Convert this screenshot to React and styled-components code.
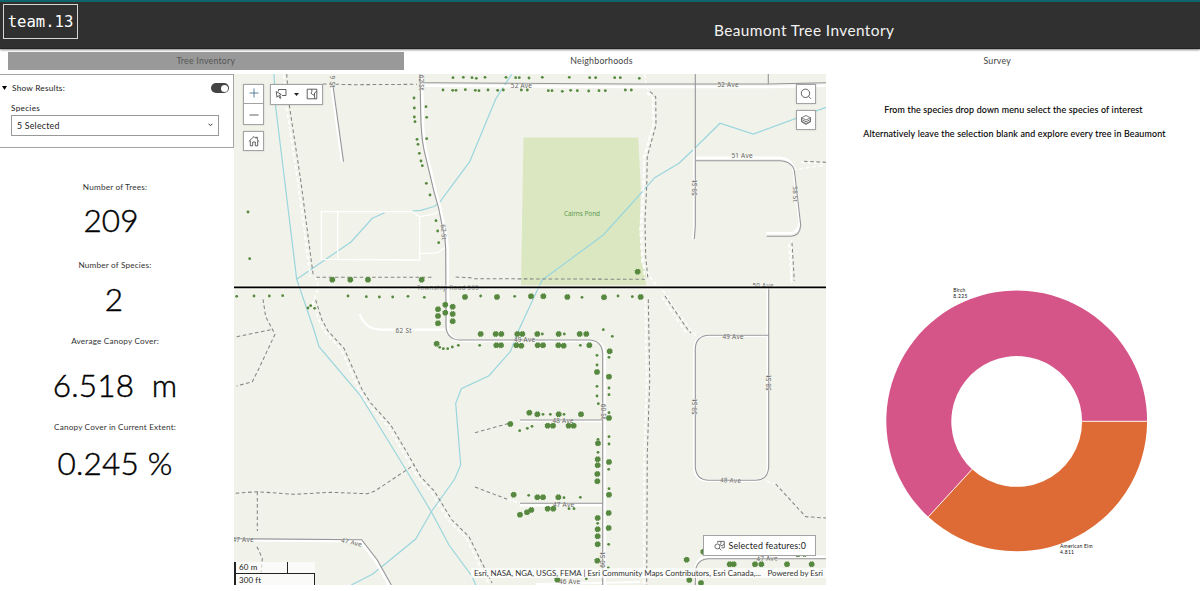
import React from "react";
import styled, { createGlobalStyle } from "styled-components";

const GlobalStyle = createGlobalStyle`
  * { box-sizing: border-box; }
  body { margin: 0; background: #fff; font-family: Lato, "Liberation Sans", sans-serif; color: #222; overflow: hidden; }
`;

const Page = styled.div`
  width: 1200px;
  height: 591px;
  display: flex;
  flex-direction: column;
  background: #fff;
`;

const Header = styled.header`
  height: 49px;
  flex: none;
  display: flex;
  align-items: flex-start;
  background: #303030;
  border-top: 2px solid #0d666d;
  border-bottom: 1px solid #222;
  box-shadow: 0 1px 2px rgba(0, 0, 0, 0.5);
`;

const Logo = styled.div`
  margin: 2px 0 0 3px;
  width: 75px;
  height: 35px;
  border: 1.5px solid #d6d6d6;
  color: #fff;
  font: 15.6px/35px "DejaVu Sans Mono", monospace;
  text-align: center;
  white-space: nowrap;
`;

const Title = styled.h1`
  margin: 17px 0 0 636px;
  font-size: 15.4px;
  line-height: 22px;
  font-weight: 400;
  letter-spacing: 0.42px;
  color: #f2f2f2;
  white-space: nowrap;
`;

const Tabs = styled.nav`
  flex: none;
  height: 25px;
  padding: 3px 0 4px 8px;
  display: flex;
`;

const Tab = styled.div`
  width: 395.7px;
  height: 18px;
  line-height: 18px;
  font-size: 8.8px;
  letter-spacing: 0.22px;
  text-align: center;
  color: ${(p) => (p.$active ? "#555" : "#444")};
  background: ${(p) => (p.$active ? "#999" : "transparent")};
`;

const Main = styled.main`
  display: grid;
  grid-template-columns: 234px 592px 374px;
  height: 510.5px;
`;

const Side = styled.aside`
  display: flex;
  flex-direction: column;
`;

const FilterPanel = styled.section`
  height: 73.5px;
  border: 1px solid #a5a5a5;
  border-left: 0;
  padding: 7px 4px 0 2px;
`;

const FilterHead = styled.div`
  display: flex;
  align-items: center;
  height: 12px;
  font-size: 8.3px;
  letter-spacing: 0.2px;
  svg { margin-right: 5px; }
`;

const Toggle = styled.span`
  margin-left: auto;
  width: 18px;
  height: 10px;
  border-radius: 5px;
  background: #444;
  display: flex;
  justify-content: flex-end;
  padding: 1.5px;
  &::after { content: ""; width: 7px; height: 7px; border-radius: 50%; background: #fff; }
`;

const FieldLabel = styled.div`
  margin: 9px 0 0 9px;
  font-size: 8.2px;
  line-height: 11px;
  letter-spacing: 0.3px;
`;

const Select = styled.div`
  margin: 1px 0 0 9px;
  width: 207.5px;
  height: 20.5px;
  border: 1px solid #999;
  display: flex;
  align-items: center;
  justify-content: space-between;
  padding: 0 5px;
  font-size: 8.8px;
  letter-spacing: 0.22px;
`;

const Stat = styled.section`
  margin-top: ${(p) => p.$top}px;
  width: 230px;
  text-align: center;
`;

const StatLabel = styled.div`
  font-size: 8.2px;
  line-height: 12px;
  letter-spacing: 0.18px;
  color: #333;
`;

const StatValue = styled.div`
  margin-top: ${(p) => p.$gap}px;
  padding-right: ${(p) => p.$trail || 0}px;
  font-size: 31.5px;
  line-height: 36px;
  font-weight: 300;
  letter-spacing: ${(p) => p.$spacing || 0}px;
  color: #000;
  -webkit-text-stroke: 0.45px #000;
  white-space: pre;
`;

const MapFrame = styled.section`
  position: relative;
  background: #f1f2ea;
  overflow: hidden;
`;

const MapCanvas = styled.svg`
  display: block;
  width: 592px;
  height: 511px;
`;

const Controls = styled.div`
  position: absolute;
  top: 9.5px;
  ${(p) => (p.$right ? "right: 9.7px;" : "left: 9.4px;")}
  display: flex;
  flex-direction: column;
  gap: 6px;
`;

const Row = styled.div`
  display: flex;
  align-items: flex-start;
  gap: 6.4px;
`;

const ControlGroup = styled.div`
  width: ${(p) => p.$w || 20.4}px;
  height: ${(p) => p.$h || 20.4}px;
  background: #fff;
  border: 1px solid #a3a3a3;
  box-shadow: 0 0 2px rgba(0, 0, 0, 0.15);
  display: flex;
  flex-direction: ${(p) => (p.$row ? "row" : "column")};
  align-items: center;
  justify-content: space-around;
`;

const Rule = styled.i`
  width: 100%;
  height: 1px;
  flex: none;
  background: #a3a3a3;
`;

const ScaleBar = styled.div`
  position: absolute;
  left: 0;
  bottom: 0;
  width: 81px;
  height: 23px;
  background: rgba(255, 255, 255, 0.65);
  border-left: 2px solid #222;
  font-size: 8px;
  letter-spacing: 0.1px;
`;

const ScaleMetric = styled.div`
  width: 52px;
  height: 11px;
  line-height: 11px;
  padding-left: 3px;
  border-right: 1px solid #222;
`;

const ScaleImperial = styled.div`
  width: 79px;
  height: 12px;
  line-height: 12px;
  padding-left: 3px;
  border-top: 1px solid #222;
  border-right: 1px solid #222;
`;

const Attribution = styled.div`
  position: absolute;
  right: 0;
  bottom: 6.5px;
  width: 355px;
  height: 10px;
  line-height: 10px;
  padding: 0 3px;
  display: flex;
  justify-content: space-between;
  font-size: 7.9px;
  background: rgba(255, 255, 255, 0.72);
  color: #333;
  white-space: nowrap;
`;

const Selected = styled.div`
  position: absolute;
  right: 10px;
  bottom: 29px;
  width: 113.5px;
  height: 20.5px;
  border: 1px solid #a3a3a3;
  background: #fff;
  display: flex;
  align-items: center;
  padding-left: 10px;
  gap: 4px;
  font-size: 8.9px;
  letter-spacing: 0.15px;
`;

const Info = styled.section`
  display: flex;
  flex-direction: column;
`;

const Hint = styled.p`
  margin: ${(p) => p.$top}px 0 0;
  padding-left: ${(p) => p.$indent}px;
  font-size: 8.9px;
  line-height: 12px;
  letter-spacing: ${(p) => p.$spacing}px;
  color: #000;
  -webkit-text-stroke: 0.12px #000;
  text-align: center;
  white-space: nowrap;
`;

const Donut = styled.svg`
  margin-top: 134px;
  width: 374px;
  height: 300px;
`;

const streams = [
  "M274 74 275.7 107 296.7 279.3 314 330 319 346.7 360 395 405.7 469.3 431.3 511.7 449 545 472.3 576.7 475.7 585",
  "M296.7 279.3 351.3 241.7 372.3 218.3 384.7 212.7",
  "M412.3 211 420.7 210.3 434 206.5 439 203 469.7 161.7 495.7 99 511.7 74.3",
  "M826 107.3 753.3 134 720 123.3 694.7 148.3 679 163.3 654.7 177.7 634 201 603.3 235 542.3 280 537.3 290 517.3 333.3 510.7 351 489 375.7 461.3 388.7 455.7 403.3 460.7 465 454.7 479 431.3 511.7 415.7 539 381.7 566.7 372.3 574.3 351.3 585",
];

const paths = [
  "M286.7 74 289 103.3 300.7 180 313.3 276",
  "M650 91.7 655.7 96.7 656 125 647.3 156.7 646.7 186.7 645 220 645.7 256.7 648 279.3",
  "M648.3 299.3 649.7 380 647.3 453 646.7 585",
  "M665 296 688 330 691 333",
  "M804 161.3 826 162.3",
  "M792 242.7 794.3 280.7",
  "M315.7 300 322 320 328 331 344 348.3 362.3 390 370.7 403 390.7 425 407.3 453 420.7 476.7 434 490.7 452 520 469 536.7 492 583",
];

const plainPaths = [
  "M323 84 355 84.7 417 84.3",
  "M316.3 277.3H434",
  "M455.7 277 470 277.7 474 278.7 647.3 279.3",
  "M263 299.3 265.7 316.7 275 334.3 259 368.3 252.3 381.7 236.7 386",
  "M236.7 336.7 272.3 329.3",
  "M235.7 493.3 257.3 491.7 294 494.3 330.7 492.3 367.3 493.7 375 491 414 465",
  "M257.3 491.7V531",
  "M257 546.7 262.3 558.3 260.7 577",
  "M475 432.7 509 423.3",
  "M475 487 507.3 499.3",
  "M775.7 484 805.7 516.7 826 518",
];

const roads = [
  { d: "M420 82.7 434 82.7 634 84H768L826 82.7", dx: 0, dy: 3 },
  { d: "M420 74 420.7 113Q421 135 424 150L434 191.7Q439 207 442 225 445.5 238 445.7 250L446 326.7Q447 339 459 340H590Q602 341 602.7 353.3V585", dx: 2, dy: 1 },
  { d: "M333 86 343.5 161.7", dx: -1.5, dy: 0 },
  { d: "M695.3 148V226L694.3 239", dx: -1, dy: 0 },
  { d: "M696 160.7H780.7Q794 162 794.7 173.3L800.7 225Q800 236 790.7 236.3H766.7", dx: -1, dy: -3 },
  { d: "M768.7 288V466.7Q768 480 755.7 480.3H709Q696 480 695.3 466.7V348.3Q696 336 709 335.3H768.7", dx: -1, dy: 0.5 },
  { d: "M826 558.7H709Q696 559 695.3 573V585", dx: 0, dy: -2 },
  { d: "M520 420H602.7", dx: 0, dy: 1 },
  { d: "M520 503.3H602.7", dx: 0, dy: 2 },
  { d: "M234 538.7 361.7 539.7 377.3 560 391.3 585", dx: -1.5, dy: 1.5 },
];

/* text, centre x, centre y, drawn length, rotation */
const labels = [
  ["52 Ave", 521.3, 85.5, 21, 0],
  ["52 Ave", 728, 84.4, 21, 0],
  ["51 Ave", 742, 156, 21, 0],
  ["50 Ave", 763, 286, 21, 0],
  ["49 Ave", 733, 337, 21, 0],
  ["48 Ave", 730.5, 480.3, 21, 2],
  ["47 Ave", 767, 558.5, 21, -2],
  ["49 Ave", 524.5, 340, 21, 0],
  ["48 Ave", 563, 420.3, 21, 0],
  ["47 Ave", 563.5, 504.6, 21, 0],
  ["46 Ave", 569.5, 581.5, 21, 0],
  ["62 St", 403.5, 330.2, 16, 0],
  ["47 Ave", 243, 540, 21, 0],
  ["47 Ave", 351.5, 542.2, 21, 12],
  ["Township Road 505", 448, 288, 62, 0],
  ["59 St", 694.3, 188, 15.5, -90],
  ["58 St", 795.3, 194, 15.5, 88],
  ["58 St", 768.7, 383, 15.5, -90],
  ["59 St", 694.3, 407, 15.5, -90],
  ["60 St", 603.5, 411.5, 15.5, 90],
  ["60 St", 602.3, 560, 15.5, -90],
  ["62 St", 443.7, 232, 15.5, 86],
  ["62 St", 421.7, 82.5, 15.5, 90],
  ["9 St", 332.7, 81.5, 12, 90],
];

/* Tree points are stored per tile, in thirds of a pixel from the tile origin. */
const tiles = [
  {
    x: 234, y: 70,
    small: "540,84 576,110 541,114 578,142 541,141 543,155 549,208 578,206 552,223 556,250 561,273 565,287 577,340 588,375 42,426 47,566 8,679 60,678 106,678 146,677 342,678 397,680 436,681 476,681 522,679 571,682 222,714 230,707 242,715",
    big: "295,629 349,629 402,629 563,629",
  },
  {
    x: 434, y: 70,
    small: "57,23 88,22 114,23 127,25 153,22 216,22 245,23 256,23 285,24 325,22 406,22 467,23 485,23 542,23 559,23 27,60 56,61 66,61 94,59 124,61 135,62 162,60 191,61 208,60 262,60 280,60 343,62 354,62 385,64 410,61 430,62 464,63 495,62 514,62 574,60 592,60 6,452 11,483 14,518 140,678 242,679 444,682 552,678 595,680",
    big: "93,681 189,681 291,679 328,679 400,681 510,682 34,704 56,710 12,718 34,728 56,732 12,738 56,754 12,760",
  },
  { x: 634, y: 70, small: "16,25", big: "11,605 20,681" },
  {
    x: 424, y: 290,
    small: "355,132 421,132 538,119 565,139 47,172 58,176 71,176 85,171 103,166 167,166 469,166 519,196 555,202 519,225 519,289 555,294 519,318 555,314 523,341 357,373 379,373 420,373 555,368 287,422 310,415 324,409 555,440 522,448 555,462 522,487 554,538 555,596 314,616 420,623 469,622 435,656 450,656 521,700 554,763 553,834 487,866",
    big: "170,132 215,132 232,132 280,132 295,132 340,132 404,132 467,132 487,132 38,161 217,166 231,166 277,166 292,167 341,166 357,166 403,166 419,167 496,166 557,184 519,246 555,260 555,384 316,368 340,373 404,373 471,373 259,402 371,407 387,407 434,407 449,407 522,460 555,516 521,508 521,526 520,552 520,574 269,614 340,622 357,622 403,622 555,614 288,674 309,667 322,660 371,656 388,656 521,684 554,669 521,718 554,714 521,739 521,763 520,812 400,869",
  },
  { x: 634, y: 320, small: "", big: "158,719 208,695 492,703 512,702 287,733 299,733 363,733 382,733 459,733 533,733 166,780 201,789" },
];

const parse = (s) => s.split(" ").filter(Boolean).map((p) => p.split(",").map(Number));

const RoadLabel = styled.text`
  font-family: "Noto Sans", sans-serif;
  font-size: 6.4px;
  fill: ${(p) => p.$fill || "#666"};
  text-anchor: middle;
  paint-order: stroke;
  stroke: ${(p) => p.$halo || "rgba(241,242,234,.5)"};
  stroke-width: 1px;
`;

function TreeMap() {
  return (
    <MapCanvas viewBox="234 74 592 511" fill="none">
      <path d="M523.5 137.5H638.3L640.7 186.7 639.7 230 641.7 263 645.7 273 646 285.5H521Z" fill="#dbe7c1" />
      <g stroke="#9ad6de" strokeWidth="1.2">{streams.map((d) => <path key={d} d={d} />)}</g>
      <g stroke="#fff" strokeWidth="1.3">
        <path d="M412.3 211.7H321.3V259.3L419.7 260V216.7L412.3 211.7M337.7 211.7V259.3M420 216.7 434 214 440 211M420 253.3H434L439 252 446 246.7" />
        <path d="M645 74 646 86 653 98 654 122 644 156 643 190 640 230 642 263 654 283 662 289 672 304 688 326 696 336M315 277 318 282 317 292 311 308" strokeDasharray="4 2.5" />
        <path d="M793 170 826 165M791.5 240V285M766 481 775 484M507 499 520 503" strokeDasharray="4 2.5" />
      </g>
      <path d="M359.7 314Q362 321 367 325 371 329 380.7 329.7H445M536 584 640 582" stroke="#fff" strokeWidth="2.2" />
      <g stroke="#fff" strokeWidth="1.6" strokeDasharray="4 2.5" transform="translate(-3 1)">
        {paths.map((d) => <path key={d} d={d} />)}
      </g>
      <g stroke="#fff" strokeWidth="2.5">
        {roads.map((r) => <path key={r.d} d={r.d} transform={`translate(${r.dx} ${r.dy})`} />)}
      </g>
      <g stroke="#858585" strokeWidth="1.05" strokeDasharray="3.6 2.6">
        {[...paths, ...plainPaths].map((d) => <path key={d} d={d} />)}
      </g>
      <g stroke="#96969a" strokeWidth="1.1">
        {roads.map((r) => <path key={r.d} d={r.d} />)}
        <path d="M695.3 74V148M768.3 74V84" />
      </g>
      {labels.map(([t, x, y, len, rot], i) => (
        <RoadLabel key={i} x={x} y={y} dy="2.3" textLength={len} transform={`rotate(${rot} ${x} ${y})`}>{t}</RoadLabel>
      ))}
      <RoadLabel x="582" y="213.8" dy="2.3" textLength="36" $fill="#5b9b50" $halo="none">Cairns Pond</RoadLabel>
      <path d="M234 285.8H826M234 288.9H826" stroke="#fff" strokeOpacity=".6" strokeWidth="1" />
      <path d="M234 287.4H826" stroke="#000" strokeWidth="1.9" />
      <g fill="#56893f">
        {tiles.map((t) => (
          <g key={`${t.x}-${t.y}`} transform={`translate(${t.x} ${t.y}) scale(.33333)`}>
            {parse(t.small).map(([x, y]) => <circle key={`${x},${y}`} cx={x} cy={y} r="4.2" />)}
            {parse(t.big).map(([x, y]) => (
              <path key={`${x},${y}`} transform={`translate(${x} ${y})`} d="M-4-9 0-7.500 4-9 6-6 9-3 8 0 9 4 5 6 4 9 0 7.500-4 9-6 6-9 3-8 0-9-4-5-6Z" />
            ))}
          </g>
        ))}
      </g>
    </MapCanvas>
  );
}

const Icon = ({ size = 12, children, ...rest }) => (
  <svg width={size} height={size} viewBox="0 0 12 12" fill="none" stroke="#444" strokeWidth=".85" {...rest}>{children}</svg>
);

function App() {
  return (
    <Page>
      <GlobalStyle />
      <Header>
        <Logo>team.13</Logo>
        <Title>Beaumont Tree Inventory</Title>
      </Header>
      <Tabs>
        <Tab $active>Tree Inventory</Tab>
        <Tab>Neighborhoods</Tab>
        <Tab>Survey</Tab>
      </Tabs>
      <Main>
        <Side>
          <FilterPanel>
            <FilterHead>
              <svg width="5" height="4"><path d="M0 0H5L2.500 4Z" fill="#000" /></svg>
              Show Results:
              <Toggle />
            </FilterHead>
            <FieldLabel>Species</FieldLabel>
            <Select>
              5 Selected
              <svg width="5" height="4" fill="none" stroke="#333"><path d="M.5.7 2.500 2.700 4.500.7" /></svg>
            </Select>
          </FilterPanel>
          <Stat $top={33}>
            <StatLabel>Number of Trees:</StatLabel>
            <StatValue $gap={9} $trail={8}>209</StatValue>
          </Stat>
          <Stat $top={21}>
            <StatLabel>Number of Species:</StatLabel>
            <StatValue $gap={10.5} $trail={2}>2</StatValue>
          </Stat>
          <Stat $top={18}>
            <StatLabel>Average Canopy Cover:</StatLabel>
            <StatValue $gap={20} $spacing={0.2}>6.518  m</StatValue>
          </Stat>
          <Stat $top={17.5}>
            <StatLabel>Canopy Cover in Current Extent:</StatLabel>
            <StatValue $gap={12} $spacing={0.2}>0.245 %</StatValue>
          </Stat>
        </Side>
        <MapFrame>
          <TreeMap />
          <Controls>
            <Row>
              <ControlGroup $h={41}>
                <Icon stroke="#3f6c8c"><path d="M6 1.500V10.500M1.500 6H10.500" /></Icon>
                <Rule />
                <Icon><path d="M1.500 6H10.500" /></Icon>
              </ControlGroup>
              <ControlGroup $w={53} $h={21.5} $row>
                <Icon><path d="M3.500 3.300V1.500H11V7.500H7M1.200 3.500 6.200 6.500 4.500 7 6 9.800 5 10.400 3.500 7.700 2 9.300Z" /></Icon>
                <svg width="5" height="3"><path d="M0 0H5L2.500 3Z" fill="#222" /></svg>
                <Icon><path d="M1.200 1.200H10.800V10.800H1.200ZM5.800 1.200V3.500L5 5 6.200 6.300 8.500 7.500 8.700 10.800M10.800 3.200 8.500 5 8.500 7.500" /></Icon>
              </ControlGroup>
            </Row>
            <ControlGroup>
              <Icon><path d="M.8 6.500 6 1.500 7.800 3.300V2.300H9.300V4.700L11.200 6.500M2.300 5.500V10.800H4.700V7H7.300V10.800H9.700V5.500" /></Icon>
            </ControlGroup>
          </Controls>
          <Controls $right>
            <ControlGroup>
              <Icon><circle cx="5.500" cy="5.300" r="4.200" /><path d="M8.500 8.300 11 10.800" /></Icon>
            </ControlGroup>
            <ControlGroup>
              <Icon strokeWidth=".7"><path d="M6 1.500 10.500 3.800 6 6 1.500 3.800ZM1.500 5.500 6 7.800 10.500 5.500M1.500 7.300 6 9.500 10.500 7.300M1.500 3.800V7.800L6 10.500 10.500 7.800V3.800" /></Icon>
            </ControlGroup>
          </Controls>
          <Selected>
            <Icon size={11}><circle cx="3.700" cy="7" r="2.700" /><path d="M5.700 9 8 11.200M4 3V1.500H11.200V8.500H8M7.500 1.500V4L6.500 5 9 6.500 11 4" /></Icon>
            Selected features:0
          </Selected>
          <ScaleBar>
            <ScaleMetric>60 m</ScaleMetric>
            <ScaleImperial>300 ft</ScaleImperial>
          </ScaleBar>
          <Attribution>
            <span>Esri, NASA, NGA, USGS, FEMA | Esri Community Maps Contributors, Esri Canada,...</span>
            <span>Powered by Esri</span>
          </Attribution>
        </MapFrame>
        <Info>
          <Hint $top={30} $indent={1} $spacing={0.18}>From the species drop down menu select the species of interest</Hint>
          <Hint $top={12} $indent={3} $spacing={0.19}>Alternatively leave the selection blank and explore every tree in Beaumont</Hint>
          <Donut viewBox="826 274 374 300">
            <path d="M1147.100 421.300A130.400 130.400 0 1 0 928.300 516.800L972.100 469.300A65.400 65.400 0 1 1 1082.100 421.300Z" fill="#d65589" />
            <path d="M1147.100 421.300A130.400 130.400 0 0 1 928.300 516.800L972.100 469.300A65.400 65.400 0 0 0 1082.100 421.300Z" fill="#de6b35" />
            <path d="M1082.100 421.300H1147.100M972.100 469.300 928.300 516.800" stroke="#fff" strokeWidth=".9" />
            <g fontSize="5" fill="#111">
              <text x="953.300" y="291.700" textLength="12">Birch</text>
              <text x="953.300" y="297.900" textLength="14">8.225</text>
              <text x="1060" y="548.300" textLength="32.500">American Elm</text>
              <text x="1060" y="554.300" textLength="14">4.811</text>
            </g>
          </Donut>
        </Info>
      </Main>
    </Page>
  );
}

export default App;
